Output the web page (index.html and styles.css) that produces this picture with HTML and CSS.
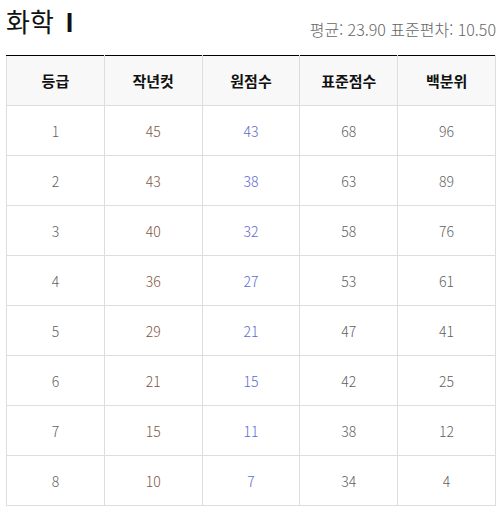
FILE: index.html
```html
<!DOCTYPE html>
<html lang="ko">
<head>
<meta charset="utf-8">
<link rel="stylesheet" href="styles.css">
</head>
<body>
<div class="wrap">
  <div class="head">
    <h1 class="title">화학 <span class="num">I</span></h1>
    <div class="stats">평균: 23.90 표준편차: 10.50</div>
  </div>
  <table class="grade">
    <thead>
      <tr><th>등급</th><th>작년컷</th><th>원점수</th><th>표준점수</th><th>백분위</th></tr>
    </thead>
    <tbody>
      <tr><td>1</td><td class="cut">45</td><td class="raw">43</td><td>68</td><td>96</td></tr>
      <tr><td>2</td><td class="cut">43</td><td class="raw">38</td><td>63</td><td>89</td></tr>
      <tr><td>3</td><td class="cut">40</td><td class="raw">32</td><td>58</td><td>76</td></tr>
      <tr><td>4</td><td class="cut">36</td><td class="raw">27</td><td>53</td><td>61</td></tr>
      <tr><td>5</td><td class="cut">29</td><td class="raw">21</td><td>47</td><td>41</td></tr>
      <tr><td>6</td><td class="cut">21</td><td class="raw">15</td><td>42</td><td>25</td></tr>
      <tr><td>7</td><td class="cut">15</td><td class="raw">11</td><td>38</td><td>12</td></tr>
      <tr><td>8</td><td class="cut">10</td><td class="raw">7</td><td>34</td><td>4</td></tr>
    </tbody>
  </table>
</div>
</body>
</html>
```
FILE: styles.css
```css
html, body { margin: 0; padding: 0; background: #fff; }
body { font-family: "Noto Sans CJK KR", "Noto Sans", sans-serif; color: #666; }
.wrap { padding: 0 6px; width: 490px; }
.head { display: flex; justify-content: space-between; align-items: flex-end; height: 55px; box-sizing: border-box; padding-bottom: 16px; }
.title { margin: 0; font-size: 26px; font-weight: 400; color: #111; line-height: 30px; position: relative; top: -3px; }
.title .num { font-weight: 700; margin-left: 4px; }
.stats { font-size: 16px; font-weight: 300; color: #666; line-height: 20px; }
.grade { width: 490px; border-collapse: collapse; table-layout: fixed; border-top: 1px solid #000; }
.grade th, .grade td { border: 1px solid #ddd; text-align: center; height: 49px; padding: 0; font-size: 14px; }
.grade thead th { border-top: 1px solid #000; background: #f8f8f8; color: #111; font-weight: 700; font-size: 15px; }
.grade td { color: #5f5f5f; font-weight: 300; }
.grade td.cut { color: #80573f; }
.grade td.raw { color: #5e6ad0; }
```
